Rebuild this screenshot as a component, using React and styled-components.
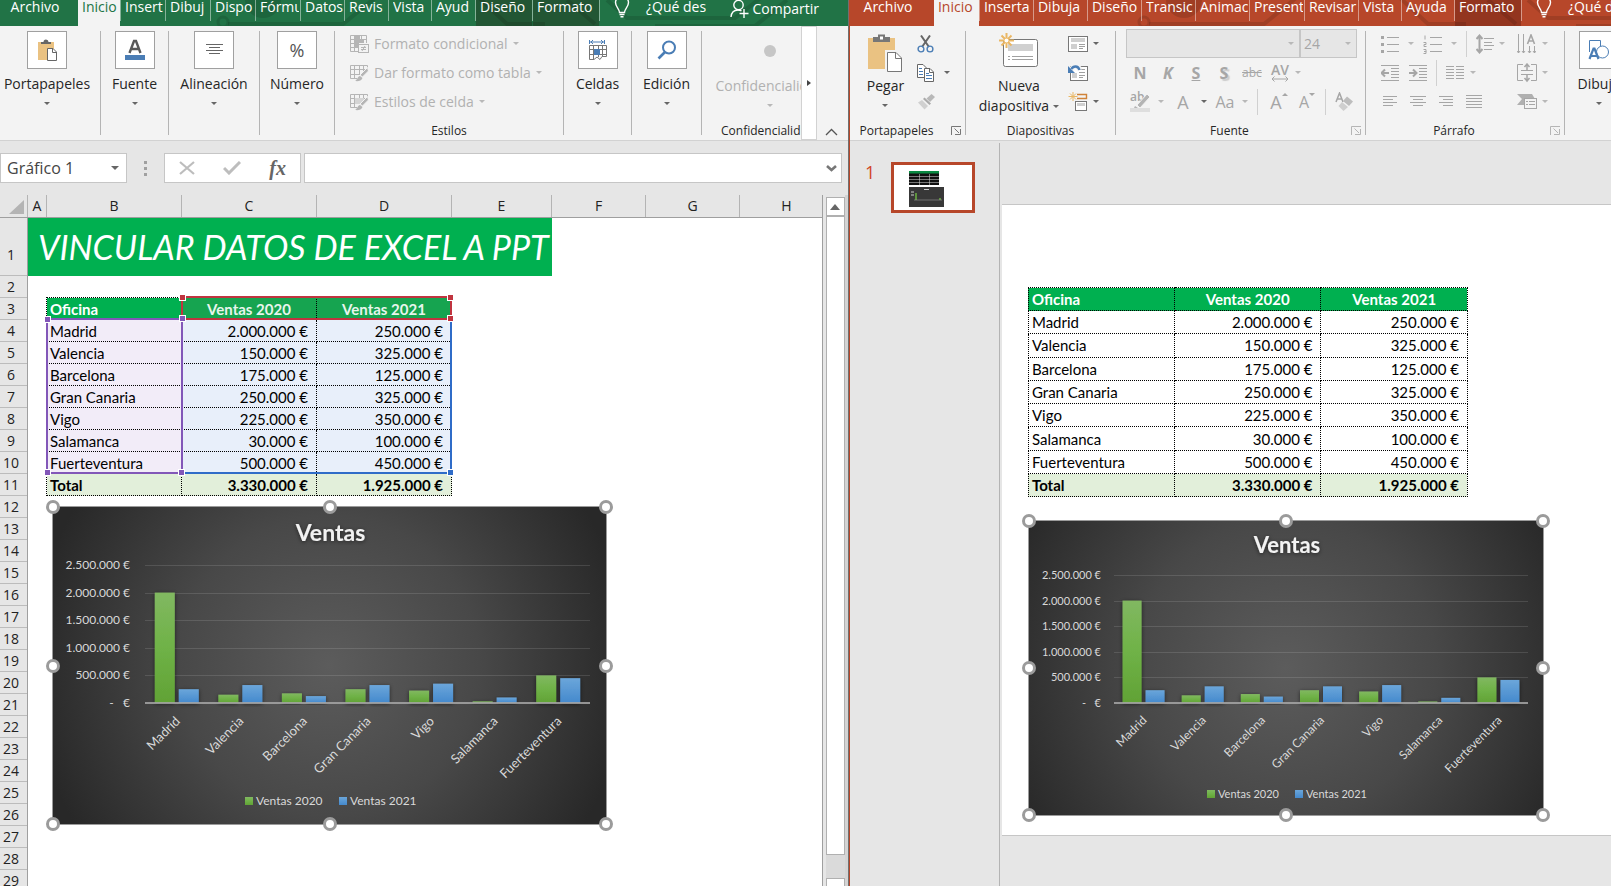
import React from 'react';
import styled, { createGlobalStyle, css } from 'styled-components';

const GlobalStyle = createGlobalStyle`
    * {
        box-sizing: border-box;
    }

    body {
        margin: 0;
        font-family: 'Open Sans', 'Noto Sans', sans-serif;
        font-size: 14px;
        color: #262626;
        background-color: #e6e6e6;
    }

    button, input, select {
        margin: 0;
        padding: 0;
        border: 0;
        border-radius: 0;
        background: transparent;
        font: inherit;
        color: inherit;
    }

    svg {
        display: block;
        flex: none;
    }
`;

const Desktop = styled.div`
    height: 100vh;
    display: flex;
    overflow: hidden;
`;

const Pane = styled.section`
    min-width: 0;
    display: flex;
    flex-direction: column;
    overflow: hidden;
    background-color: #e6e6e6;
`;

const ExcelPane = styled(Pane)`
    flex: 849 1 0;
    border-right: 1px solid #707070;
`;

const PowerPane = styled(Pane)`
    flex: 762 1 0;
    border-left: 1px solid #b7472a;
`;

/* tab strip */

const TabStrip = styled.nav`
    position: relative;
    height: 26px;
    flex: none;
    display: flex;
    overflow: hidden;
    color: #fff;
    background-color: ${(props) => props.$color};
`;

const Circuit = styled.svg`
    position: absolute;
    top: 0;
    left: ${(props) => props.$left}px;
`;

const Tab = styled.button`
    position: relative;
    flex: none;
    width: ${(props) => props.$width}px;
    height: 26px;
    padding: 0 1px 12px 4px;
    overflow: hidden;
    line-height: 14px;
    text-align: left;
    white-space: nowrap;
    ${(props) => props.$first && css`
        text-align: center;
        padding: 0 8px 12px 0;
    `}
    ${(props) => props.$active && css`
        padding: 0 0 12px 4px;
        color: ${props.$active};
        background-color: #f3f3f3;
    `}
    ${(props) => props.$context && css`
        background-color: rgba(40, 0, 0, 0.25);
    `}
`;

const TabText = styled.span`
    display: block;
    overflow: hidden;
    height: 26px;
    line-height: 14px;
`;

const TabLine = styled.i`
    position: relative;
    flex: none;
    width: 1px;
    height: 21px;
    background-color: rgba(255, 255, 255, 0.45);
`;

const TellMe = styled.button`
    position: relative;
    flex: none;
    height: 26px;
    padding-left: 14px;
    padding-bottom: 12px;
    display: flex;
    gap: 16px;
    line-height: 14px;
    white-space: nowrap;
`;

const Share = styled.button`
    position: relative;
    margin-left: auto;
    margin-right: 29px;
    height: 26px;
    padding-bottom: 8px;
    display: flex;
    gap: 3px;
    line-height: 18px;
`;

/* ribbon */

const Ribbon = styled.div`
    flex: none;
    height: 115px;
    display: flex;
    overflow: hidden;
    border-bottom: 1px solid #d2d2d2;
    background-color: #f3f3f3;
`;

const Group = styled.div`
    flex: none;
    width: ${(props) => props.$width}px;
    display: flex;
    flex-direction: column;
    overflow: hidden;
`;

const FluidGroup = styled(Group)`
    flex: 1 1 0;
    width: auto;
    min-width: 0;
`;

const GroupBody = styled.div`
    flex: 1;
    display: flex;
    padding-left: ${(props) => props.$left || 0}px;
`;

const GroupFooter = styled.div`
    height: 19px;
    flex: none;
    display: flex;
    align-items: center;
    padding: 0 4px 0 0;
    font-size: 12px;
    line-height: 16px;
    white-space: nowrap;
`;

const GroupTitle = styled.span`
    flex: 1;
    text-align: center;
    padding-left: ${(props) => props.$left || 0}px;
    padding-right: ${(props) => props.$right || 0}px;
`;

const Divider = styled.i`
    flex: none;
    width: 1px;
    margin: 5px 0;
    background-color: #b4b4b4;
`;

const DropButton = styled.button`
    width: 100%;
    padding: 5px ${(props) => props.$right || 0}px 0 0;
    display: flex;
    flex-direction: column;
    align-items: center;
    line-height: 20px;
    white-space: nowrap;
`;

const IconBox = styled.span`
    width: 40px;
    height: 38px;
    margin-bottom: 5px;
    display: flex;
    align-items: center;
    justify-content: center;
    border: 1px solid #a0a0a0;
    background-color: #fff;
`;

const BigButton = styled.button`
    flex: none;
    width: ${(props) => props.$width}px;
    margin-left: 4px;
    padding-top: 7px;
    display: flex;
    flex-direction: column;
    align-items: center;
    line-height: 20px;
    color: ${(props) => (props.disabled ? '#b1b1b1' : 'inherit')};
    white-space: nowrap;
`;

const BigIcon = styled.span`
    height: 43px;
`;

const Caret = styled.i`
    flex: none;
    width: 0;
    height: 0;
    border: 3px solid transparent;
    border-bottom-width: 0;
    border-top-color: ${(props) => (props.$dim ? '#b8b8b8' : '#666')};
`;

const DropCaret = styled(Caret)`
    margin-top: 8px;
`;

const TightCaret = styled(Caret)`
    margin-left: -5px;
`;

const NameCaret = styled(Caret)`
    border-width: 4px 4px 0;
`;

const WordLine = styled.span`
    display: flex;
    align-items: center;
    gap: 4px;
`;

const Rows = styled.div`
    flex: 1;
    padding: 3px ${(props) => props.$right || 0}px 0 0;
    display: flex;
    flex-direction: column;
`;

const Row = styled.div`
    height: 29px;
    display: flex;
    align-items: center;
`;

const StyleButton = styled.button`
    height: 29px;
    display: flex;
    align-items: center;
    gap: 5px;
    color: #b1b1b1;
    white-space: nowrap;
`;

const Tool = styled.button`
    flex: none;
    width: ${(props) => props.$width || 28}px;
    height: 26px;
    display: flex;
    align-items: center;
    justify-content: center;
    color: #a6a6a6;
    font-size: ${(props) => props.$size || 16}px;
    font-weight: ${(props) => (props.$bold ? 700 : 400)};
    font-style: ${(props) => (props.$italic ? 'italic' : 'normal')};
    text-decoration: ${(props) => props.$line || 'none'};
    text-shadow: ${(props) => (props.$shadow ? '2px 2px 1px #ccc' : 'none')};
`;

const SideTool = styled(Tool)`
    justify-content: flex-start;
    gap: 10px;
`;

const MoreButton = styled.button`
    flex: none;
    width: ${(props) => props.$width}px;
    height: 26px;
    display: flex;
    align-items: center;
    justify-content: center;
`;

const Pusher = styled.i`
    flex: 1;
`;

const ToolLine = styled.i`
    flex: none;
    width: 1px;
    height: 26px;
    margin: 0 ${(props) => props.$gap}px;
    background-color: #d0d0d0;
`;

const Combo = styled.div`
    flex: none;
    width: ${(props) => props.$width}px;
    height: 29px;
    padding: 0 5px 0 3px;
    display: flex;
    align-items: center;
    border: 1px solid #c6c6c6;
    color: #a6a6a6;
    background-color: #e6e6e6;

    select {
        flex: 1;
        min-width: 0;
        appearance: none;
        opacity: 1;
    }
`;

const Dot = styled.span`
    width: 12px;
    height: 12px;
    margin: 12px 0 19px;
    border-radius: 50%;
    background-color: #c6c6c6;
`;

const RibbonScroll = styled.button`
    flex: none;
    width: 16px;
    border: 1px solid #d2d2d2;
    background-color: #fff;
    display: flex;
    align-items: center;
    justify-content: center;
`;

const CollapseButton = styled.button`
    flex: none;
    width: 31px;
    padding: 0 0 4px 8px;
    display: flex;
    align-items: flex-end;
`;

const Percent = styled.span`
    font-size: 18px;
    color: #555;
`;

/* formula bar */

const FormulaBar = styled.div`
    flex: none;
    height: 54px;
    padding: 12px 6px 12px 0;
    display: flex;
    font-size: 16px;
    color: #444;
`;

const Field = styled.div`
    height: 30px;
    display: flex;
    align-items: center;
    border: 1px solid #c6c6c6;
    background-color: #fff;

    input {
        flex: 1;
        min-width: 0;
        padding-left: 6px;
        outline: none;
    }
`;

const NameField = styled(Field)`
    flex: none;
    width: 127px;
    padding-right: 7px;
`;

const FunctionField = styled(Field)`
    flex: none;
    width: 137px;
    justify-content: space-around;
`;

const FormulaField = styled(Field)`
    flex: 1;
    margin-left: 3px;
    padding-right: 3px;
`;

const FxMark = styled.span`
    font-family: 'Liberation Serif', serif;
    font-size: 20px;
    font-style: italic;
    font-weight: 700;
    line-height: 24px;
    color: #666;
`;

const Grip = styled.div`
    flex: none;
    width: 37px;
    display: flex;
    flex-direction: column;
    align-items: center;
    justify-content: center;
    gap: 3px;

    i {
        width: 3px;
        height: 3px;
        background-color: #a0a0a0;
    }
`;

/* worksheet */

const SheetArea = styled.div`
    flex: 1;
    min-height: 0;
    display: flex;
    font-size: 14px;
`;

const Sheet = styled.div`
    flex: 1;
    min-width: 0;
    display: flex;
    flex-direction: column;
    border-right: 1px solid #9f9f9f;
`;

const HeaderRow = styled.div`
    flex: none;
    height: 23px;
    display: flex;
    overflow: hidden;
    border-bottom: 1px solid #9f9f9f;
`;

const Corner = styled.div`
    flex: none;
    width: 28px;
    padding: 5px 3px;
    border-right: 1px solid #b4b4b4;
    display: flex;
    justify-content: flex-end;
`;

const ColumnHead = styled.div`
    flex: none;
    width: ${(props) => props.$width}px;
    border-right: 1px solid #b4b4b4;
    line-height: 22px;
    text-align: center;
    color: #222;
`;

const SheetBody = styled.div`
    flex: 1;
    min-height: 0;
    display: flex;
    overflow: hidden;
`;

const RowHeads = styled.div`
    flex: none;
    width: 28px;
    border-right: 1px solid #9f9f9f;
    text-align: center;
    color: #222;
`;

const RowHead = styled.div`
    height: ${(props) => (props.$tall ? 58 : 22)}px;
    padding: ${(props) => (props.$tall ? 26 : 0)}px 5px 0 0;
    border-bottom: 1px solid #bcbcbc;
    line-height: 22px;
`;

const Cells = styled.div`
    flex: 1;
    min-width: 0;
    overflow: hidden;
    background-color: #fff;
`;

const Banner = styled.h1`
    width: 524px;
    height: 58px;
    margin: 0;
    padding-left: 10px;
    line-height: 58px;
    font-family: Lato, 'Open Sans', sans-serif;
    font-size: 34px;
    font-style: italic;
    font-weight: 400;
    white-space: nowrap;
    color: #fff;
    background-color: #00b050;
`;

const SheetTable = styled.div`
    position: relative;
    width: 406px;
    margin: 21px 0 0 18px;
`;

const Table = styled.table`
    width: 100%;
    table-layout: fixed;
    border-collapse: collapse;
    font-family: Lato, 'Open Sans', sans-serif;
    font-size: 15px;
    line-height: 20px;
    color: #000;

    th, td {
        height: ${(props) => props.$row}px;
        padding: 0 8px 0 3px;
        border: 1px dotted #000;
        text-align: right;
        white-space: nowrap;
    }

    th:first-child, td:first-child {
        width: ${(props) => props.$first}px;
        padding-right: 3px;
        text-align: left;
        font-weight: inherit;
    }

    thead th {
        padding-right: 3px;
        color: #fff;
        background-color: #00b050;
        text-align: center;
    }

    thead tr, tfoot tr {
        font-weight: 700;
    }

    tfoot th, tfoot td {
        background-color: #e2efda;
    }
`;

const RangeTable = styled(Table)`
    thead th + th {
        color: #e8f5ec;
        background-color: #16a450;
    }

    tbody th {
        background-color: #f2ecf8;
    }

    tbody td {
        background-color: #e8effa;
    }
`;

const Range = styled.div`
    position: absolute;
    top: ${(props) => props.$top}px;
    left: ${(props) => props.$left}px;
    width: ${(props) => props.$width}px;
    height: ${(props) => props.$height}px;
    border: 2px solid ${(props) => props.$color};
`;

const RangeKnob = styled.i`
    position: absolute;
    width: 7px;
    height: 7px;
    border: 1px solid #fff;
    background-color: ${(props) => props.$color};
    left: ${(props) => (props.$right ? 'auto' : '-4px')};
    right: ${(props) => (props.$right ? '-4px' : 'auto')};
    top: ${(props) => (props.$bottom ? 'auto' : '-4px')};
    bottom: ${(props) => (props.$bottom ? '-4px' : 'auto')};
`;

const ScrollTrack = styled.div`
    flex: none;
    width: 25px;
    padding: 2px 0 0 3px;
    display: flex;
    flex-direction: column;
    border-right: 3px solid #d4d4d4;
`;

const ScrollButton = styled.button`
    flex: none;
    height: 19px;
    display: flex;
    align-items: center;
    justify-content: center;
    border: 1px solid #b0b0b0;
    background-color: #fff;
`;

const ScrollThumb = styled.div`
    flex: 1;
    border: 1px solid #b0b0b0;
    background-color: #fff;
`;

const ScrollGap = styled.div`
    flex: none;
    height: 23px;
    background-color: #dadada;
`;

const ScrollEnd = styled.div`
    flex: none;
    height: 8px;
    border: 1px solid #b0b0b0;
    border-bottom: 0;
    background-color: #fff;
`;

/* chart */

const ChartFrame = styled.figure`
    position: relative;
    width: ${(props) => props.$width}px;
    margin: ${(props) => props.$top}px 0 0 ${(props) => props.$left}px;
    border: 1px solid #9b9b9b;
    background: radial-gradient(circle 300px at center, #5c5c5c, #484848 50%, #282828);
`;

const ChartText = styled.text`
    font-family: Lato, 'Open Sans', sans-serif;
    font-size: ${(props) => props.$size}px;
    font-weight: ${(props) => (props.$bold ? 700 : 400)};
    fill: ${(props) => (props.$bold ? '#f2f2f2' : '#d9d9d9')};
`;

const Knob = styled.i`
    position: absolute;
    width: 14px;
    height: 14px;
    margin: -7px;
    border: 3px solid #9b9b9b;
    border-radius: 50%;
    background-color: #fff;
    left: ${(props) => props.$x};
    top: ${(props) => props.$y};
`;

/* presentation */

const Stage = styled.div`
    flex: 1;
    min-height: 0;
    display: flex;
`;

const Thumbnails = styled.aside`
    flex: none;
    width: 150px;
    padding: 21px 0 0 15px;
    margin-top: 2px;
    display: flex;
    align-items: flex-start;
    gap: 16px;
    border-right: 1px solid #b4b4b4;
`;

const SlideNumber = styled.span`
    flex: none;
    width: 10px;
    font-size: 18px;
    line-height: 16px;
    color: #d24726;
`;

const Thumbnail = styled.button`
    flex: none;
    width: 84px;
    height: 51px;
    margin-top: -2px;
    border: 3px solid #b7472a;
    background-color: #fff;
`;

const Workspace = styled.main`
    flex: 1;
    min-width: 0;
    padding: 63px 0 50px 2px;
    display: flex;
    overflow: hidden;
`;

const Slide = styled.div`
    flex: 1;
    min-width: 0;
    padding: 82px 0 0 26px;
    overflow: hidden;
    border-top: 1px solid #c6c6c6;
    border-bottom: 1px solid #c6c6c6;
    background-color: #fff;
`;

const SlideTable = styled.div`
    width: 440px;
    height: 210px;

    table {
        height: 210px;
    }
`;

const sales = [
    { office: 'Madrid', y2020: 2000000, y2021: 250000 },
    { office: 'Valencia', y2020: 150000, y2021: 325000 },
    { office: 'Barcelona', y2020: 175000, y2021: 125000 },
    { office: 'Gran Canaria', y2020: 250000, y2021: 325000 },
    { office: 'Vigo', y2020: 225000, y2021: 350000 },
    { office: 'Salamanca', y2020: 30000, y2021: 100000 },
    { office: 'Fuerteventura', y2020: 500000, y2021: 450000 },
];

const euro = (n) => `${String(n).replace(/\B(?=(\d{3})+$)/g, '.')} €`;
const total = (key) => sales.reduce((sum, item) => sum + item[key], 0);

const SalesRows = () => (
    <>
        <thead>
            <tr>
                <th scope="col">Oficina</th>
                <th scope="col">Ventas 2020</th>
                <th scope="col">Ventas 2021</th>
            </tr>
        </thead>
        <tbody>
            {sales.map((item) => (
                <tr key={item.office}>
                    <th scope="row">{item.office}</th>
                    <td>{euro(item.y2020)}</td>
                    <td>{euro(item.y2021)}</td>
                </tr>
            ))}
        </tbody>
        <tfoot>
            <tr>
                <th scope="row">Total</th>
                <td>{euro(total('y2020'))}</td>
                <td>{euro(total('y2021'))}</td>
            </tr>
        </tfoot>
    </>
);

const knobs = [
    ['0%', '0%'], ['50%', '0%'], ['100%', '0%'],
    ['0%', '50%'], ['100%', '50%'],
    ['0%', '100%'], ['50%', '100%'], ['100%', '100%'],
];

const excelChart = {
    id: 'xl', width: 555, height: 317, marginTop: 10, marginLeft: 24,
    x0: 92, x1: 537, y0: 58, y1: 196, labelX: 77, bar: 20, barGap: 4,
    titleY: 34, titleSize: 23, axisSize: 12, nameSize: 13, nameY: 19,
    legendY: 298, legend: [192, 286],
};

const slideChart = {
    id: 'pp', width: 516, height: 294, marginTop: 23, marginLeft: 0,
    x0: 85, x1: 499, y0: 54, y1: 182, labelX: 72, bar: 19, barGap: 4,
    titleY: 32, titleSize: 22, axisSize: 11, nameSize: 12, nameY: 18,
    legendY: 277, legend: [178, 266],
};

const SalesChart = ({ chart }) => {
    const { id, x0, x1, y0, y1, bar, barGap } = chart;
    const step = (x1 - x0) / sales.length;
    const barHeight = (n) => ((y1 - y0) * n) / 2500000;
    const ticks = [2500000, 2000000, 1500000, 1000000, 500000, 0];

    return (
        <ChartFrame $width={chart.width} $top={chart.marginTop} $left={chart.marginLeft}>
            <svg width="100%" height={chart.height} role="img" aria-label="Ventas">
                <defs>
                    <linearGradient id={`${id}-green`} x1="0" y1="0" x2="0" y2="1">
                        <stop offset="0" stopColor="#81b861" />
                        <stop offset="0.5" stopColor="#6fb247" />
                        <stop offset="1" stopColor="#61a235" />
                    </linearGradient>
                    <linearGradient id={`${id}-blue`} x1="0" y1="0" x2="0" y2="1">
                        <stop offset="0" stopColor="#6ba6da" />
                        <stop offset="1" stopColor="#4489cd" />
                    </linearGradient>
                    <filter id={`${id}-shadow`} x="-50%" y="-20%" width="200%" height="140%">
                        <feDropShadow dx="0" dy="1" stdDeviation="2" floodOpacity="0.55" />
                    </filter>
                </defs>
                <ChartText x={chart.width / 2} y={chart.titleY} textAnchor="middle" $size={chart.titleSize} $bold filter={`url(#${id}-shadow)`}>
                    Ventas
                </ChartText>
                {ticks.map((n) => {
                    const y = y1 - barHeight(n);
                    return (
                        <g key={n}>
                            {n > 0 && <path d={`M${x0} ${Math.round(y) + 0.5}H${x1}`} stroke="#fff" strokeOpacity="0.12" />}
                            <ChartText x={chart.labelX} y={y + 4} textAnchor="end" $size={chart.axisSize}>
                                {n ? euro(n) : '-\u00A0\u00A0\u00A0€'}
                            </ChartText>
                        </g>
                    );
                })}
                {sales.map((item, i) => {
                    const mid = x0 + step * (i + 0.5);
                    return (
                        <g key={item.office}>
                            <g filter={`url(#${id}-shadow)`}>
                                <rect x={mid - bar - barGap / 2} y={y1 - barHeight(item.y2020)} width={bar} height={barHeight(item.y2020)} fill={`url(#${id}-green)`} />
                                <rect x={mid + barGap / 2} y={y1 - barHeight(item.y2021)} width={bar} height={barHeight(item.y2021)} fill={`url(#${id}-blue)`} />
                            </g>
                            <ChartText transform={`translate(${mid + 4} ${y1 + chart.nameY}) rotate(-45)`} textAnchor="end" $size={chart.nameSize}>
                                {item.office}
                            </ChartText>
                        </g>
                    );
                })}
                <path d={`M${x0} ${y1}H${x1}`} stroke="#a6a6a6" strokeWidth="2" strokeOpacity="0.85" />
                {['Ventas 2020', 'Ventas 2021'].map((name, i) => (
                    <g key={name}>
                        <rect x={chart.legend[i]} y={chart.legendY - 8} width="8" height="8" fill={`url(#${id}-${i ? 'blue' : 'green'})`} />
                        <ChartText x={chart.legend[i] + 11} y={chart.legendY} $size={chart.axisSize}>{name}</ChartText>
                    </g>
                ))}
            </svg>
            {knobs.map(([x, y]) => (
                <Knob key={x + y} $x={x} $y={y} />
            ))}
        </ChartFrame>
    );
};

/* icons */

const CircuitArt = ({ left }) => (
    <Circuit $left={left} width="600" height="26" fill="none" stroke="#000" strokeOpacity="0.12" strokeWidth="4">
        <circle cx="8" cy="22" r="5" strokeWidth="3" />
        <path d="M13 24H128L160 -2M262 -4L292 24H330M352 0L380 24M392 0L412 18H520L548 -4M440 26H540L572 0" />
        <circle cx="48" cy="0" r="18" fill="#000" fillOpacity="0.12" stroke="none" />
    </Circuit>
);

const Bulb = () => (
    <svg width="16" height="18" viewBox="0 0 16 18" fill="none" stroke="#fff" strokeWidth="1.4">
        <path d="M5.5 12.5C5.5 9 1.5 7 1.5 2.5A6.5 6 0 0 1 14.500 2.500C14.500 7 10.500 9 10.500 12.500ZM5.500 14.500H10.500M6.500 16.700H9.500" />
    </svg>
);

const SharePerson = () => (
    <svg width="19" height="18" viewBox="0 0 19 18" fill="none" stroke="#fff" strokeWidth="1.4">
        <circle cx="8.500" cy="5" r="4.700" />
        <path d="M1 17C1.500 12 4.500 10 8 10C9.500 10 10.500 10.300 11.500 11M14 9V18M9.500 13.500H18.500" />
    </svg>
);

const PasteSmall = () => (
    <svg width="20" height="22" viewBox="0 0 20 22">
        <path d="M1 3H17V21H1Z" fill="#eac282" />
        <path d="M4 5V3H6.500A2.500 2.500 0 0 1 11.500 3H14V5Z" fill="#666" />
        <path d="M10.500 9.500H16L19.500 13V21.500H10.500Z" fill="#fff" stroke="#666" />
        <path d="M15.500 9.500V13.500H19.500" fill="none" stroke="#666" />
    </svg>
);

const PasteLarge = () => (
    <svg width="36" height="40" viewBox="0 0 36 40">
        <path d="M1 5H28V36H1Z" fill="#eac282" />
        <path d="M6 9V4H11V1.500H18V4H23V9Z" fill="#777" />
        <rect x="13" y="3.500" width="3" height="3" fill="#fff" />
        <path d="M19.500 18.500H29L34.500 24V38.500H19.500Z" fill="#fff" stroke="#f3f3f3" strokeWidth="3" />
        <path d="M20.500 19.500H29L34.500 25V38.500H20.500Z" fill="#fff" stroke="#777" />
        <path d="M28.500 19.500V25.500H34.500" fill="none" stroke="#777" />
    </svg>
);

const FontBox = () => (
    <svg width="22" height="22" viewBox="0 0 22 22">
        <path d="M5.500 14L10 2H12L16.500 14M7.500 10H14.500" fill="none" stroke="#595959" strokeWidth="2.400" />
        <rect x="1" y="16" width="20" height="5" fill="#4a7db5" />
    </svg>
);

const Lines = ({ rows, width = 18, height = 20, color = '#a6a6a6' }) => (
    <svg width={width} height={height} stroke={color}>
        {rows.map(([a, b, y]) => (
            <path key={`${a}-${y}`} d={`M${a} ${y}.500H${b}`} />
        ))}
    </svg>
);

const CellsIcon = () => (
    <svg width="20" height="22" viewBox="0 0 20 22" fill="none" stroke="#777">
        <path d="M1.500 1V5M16.500 1V5M2 3H16M5 1L3 3L5 5M13 1L15 3L13 5" stroke="#4a7db5" />
        <path d="M1.500 6.500H18.500V17.500H14L12 20.500L9 18L6 20.500H1.500ZM5.500 6V20M10.500 6V18M14.500 6V18M1 10.500H18M1 15.500H18" />
        <rect x="6" y="10" width="6" height="6" fill="#4a7db5" stroke="none" />
    </svg>
);

const Magnifier = () => (
    <svg width="20" height="20" viewBox="0 0 20 20" fill="none" stroke="#4a7db5" strokeWidth="2">
        <circle cx="12" cy="7.500" r="6" />
        <path d="M8 12L1.500 18.500" strokeWidth="2.600" />
    </svg>
);

const CondIcon = () => (
    <svg width="19" height="20" viewBox="0 0 19 20" fill="none" stroke="#b5b5b5">
        <path d="M0.500 1.500H16.500V9M9 17.500H0.500V1.500M4.500 1V18M11.500 1V9M1 5.500H16M1 9.500H9M1 13.500H8" />
        <path d="M5 2H10V5H5ZM5 6H14V9H5ZM5 10H8V13H5Z" fill="#b5b5b5" stroke="none" />
        <rect x="8.500" y="10.500" width="10" height="8" fill="#f3f3f3" />
        <path d="M11 13.500H16M11 15.500H16M15 12L12 17" />
    </svg>
);

const TableIcon = ({ filled }) => (
    <svg width="19" height="20" viewBox="0 0 19 20" fill="none" stroke="#b5b5b5">
        <path d="M0.500 2.500H17.500V8M7 15.500H0.500V2.500M4.500 2V15M9.500 2V12M13.500 2V9M1 6.500H16M1 11.500H11" />
        {filled && <rect x="5" y="6" width="9" height="6" fill="#d5d5d5" stroke="none" />}
        <path d="M17.500 4.500L18.500 8L12.500 14L10 12Z" fill="#b5b5b5" stroke="#f3f3f3" />
        <path d="M10 13L12.500 15C11.500 18 8 18.500 5 18C7.500 17 7.500 13.500 10 13Z" fill="#b5b5b5" stroke="none" />
    </svg>
);

const Chevron = ({ up, color = '#555', bold }) => (
    <svg width="13" height="8" viewBox="0 0 13 8" fill="none" stroke={color} strokeWidth={bold ? 2.6 : 1.3}>
        <path d={up ? 'M1 7L6.500 1.500L12 7' : 'M2 2L6.500 6L11 2'} />
    </svg>
);

const CrossIcon = () => (
    <svg width="16" height="14" viewBox="0 0 16 14" stroke="#bdbdbd" strokeWidth="2.200">
        <path d="M1 1L15 13M15 1L1 13" />
    </svg>
);

const CheckIcon = () => (
    <svg width="18" height="14" viewBox="0 0 18 14" fill="none" stroke="#bdbdbd" strokeWidth="3">
        <path d="M1 7L6 12L17 1" />
    </svg>
);

const Launcher = ({ dim }) => (
    <svg width="10" height="9" viewBox="0 0 10 9" fill="none" stroke={dim ? '#b5b5b5' : '#777'}>
        <path d="M0.500 9V0.500H10M3.500 2.500L8 7M9.500 3V8.500H4" />
    </svg>
);

const Scissors = () => (
    <svg width="17" height="18" viewBox="0 0 17 18" fill="none">
        <path d="M4 0.500L12 12M13 0.500L5 12" stroke="#666" strokeWidth="2" />
        <circle cx="4" cy="14" r="2.900" stroke="#4a7db5" strokeWidth="1.400" />
        <circle cx="13" cy="14" r="2.900" stroke="#4a7db5" strokeWidth="1.400" />
    </svg>
);

const CopyIcon = () => (
    <svg width="17" height="18" viewBox="0 0 17 18" fill="#fff" stroke="#666">
        <path d="M0.500 0.500H6L9.500 4V13.500H0.500Z" />
        <path d="M2 4.500H5M2 7.500H6M2 10.500H6" stroke="#4a7db5" />
        <path d="M7.500 4.500H13L16.500 8V17.500H7.500Z" />
        <path d="M12.500 4.500V8.500H16.500" fill="none" />
        <path d="M9 9.500H12M9 11.500H15M9 14.500H15" stroke="#4a7db5" />
    </svg>
);

const BrushIcon = () => (
    <svg width="18" height="16" viewBox="0 0 18 16">
        <path d="M14.500 0L18 3L13 8L9.500 4.500Z" fill="#b8b8b8" />
        <path d="M7.500 3.500L14 9.500L12.500 11L6 5Z" fill="#aaa" />
        <path d="M5 6L11 12L7.500 15.500L1 8.500Z" fill="#d0d0d0" />
    </svg>
);

const burst = 'M7.500 0V15M0 7.500H15M2.500 2.500L12.500 12.500M12.500 2.500L2.500 12.500';

const NewSlideIcon = () => (
    <svg width="40" height="40" viewBox="0 0 40 40" fill="none">
        <rect x="4.500" y="6.500" width="34" height="27" rx="2" fill="#fff" stroke="#777" />
        <rect x="9" y="11" width="25" height="7" fill="#d0d0d0" />
        <path d="M9 23.500H11M13 23.500H34M9 26.500H11M13 26.500H34" stroke="#a0a0a0" />
        <path d={burst} stroke="#eab765" strokeWidth="2" />
        <circle cx="7.500" cy="7.500" r="2" fill="#fff" />
    </svg>
);

const LayoutIcon = () => (
    <svg width="20" height="16" viewBox="0 0 20 16" fill="none">
        <rect x="0.500" y="0.500" width="19" height="15" fill="#fff" stroke="#777" />
        <path d="M3 2H17V6H3ZM3 8H9V13H3Z" fill="#d0d0d0" />
        <path d="M11 8.500H17M11 10.500H17M11 12.500H15" stroke="#a0a0a0" />
    </svg>
);

const ResetIcon = () => (
    <svg width="20" height="18" viewBox="0 0 20 18" fill="none">
        <rect x="2.500" y="2.500" width="17" height="14" fill="#fff" stroke="#777" />
        <path d="M4 9H9V14H4Z" fill="#d0d0d0" />
        <path d="M11 5.500H17M11 8.500H17M11 11.500H17M11 13.500H15" stroke="#a0a0a0" />
        <path d="M3 6C5 2 10 1 12 6" stroke="#f3f3f3" strokeWidth="5" />
        <path d="M3.500 5C5 2 10 1 11.500 6" stroke="#4a7db5" strokeWidth="2.400" />
        <path d="M0 2V9H7Z" fill="#4a7db5" />
    </svg>
);

const SectionIcon = () => (
    <svg width="20" height="19" viewBox="0 0 20 19" fill="none">
        <path d="M5 0V9M0.500 4.500H9.500M2 1.500L8 7.500M8 1.500L2 7.500" stroke="#eab765" />
        <path d="M9 2.500H18.500V6.500H9" stroke="#d08238" strokeWidth="1.400" />
        <rect x="7.500" y="9.500" width="11" height="9" fill="#fff" stroke="#777" />
        <path d="M9 11H17V14H9Z" fill="#d0d0d0" />
    </svg>
);

const SpacingMark = styled.span`
    display: flex;
    flex-direction: column;
    align-items: center;
    font-size: 14px;
    font-weight: 600;
    line-height: 12px;
`;

const SpacingIcon = () => (
    <SpacingMark>
        AV
        <svg width="18" height="6" viewBox="0 0 18 6" fill="none" stroke="#a6a6a6">
            <path d="M1 3H17M3.500 0.500L1 3L3.500 5.500M14.500 0.500L17 3L14.500 5.500" />
        </svg>
    </SpacingMark>
);

const MarkerMark = styled.span`
    width: 20px;
    height: 20px;
    font-size: 12px;
    font-weight: 600;
    line-height: 10px;
    text-align: left;
    border-bottom: 4px solid #dedede;

    svg {
        overflow: visible;
    }
`;

const MarkerIcon = () => (
    <MarkerMark>
        ab
        <svg width="20" height="6" viewBox="0 0 20 6">
            <path d="M7 3L17 -8L20 -5L10 6Z" fill="#b4b4b4" stroke="#f3f3f3" />
            <path d="M5 4L8 6H4Z" fill="#b4b4b4" />
        </svg>
    </MarkerMark>
);

const SizeArrow = styled.i`
    align-self: flex-start;
    margin-top: 4px;
    border: 3px solid transparent;
    border-top: ${(props) => (props.$up ? 0 : '3px solid #a6a6a6')};
    border-bottom: ${(props) => (props.$up ? '3px solid #a6a6a6' : 0)};
`;

const EraserIcon = () => (
    <svg width="18" height="20" viewBox="0 0 18 20">
        <path d="M1 10L4.500 1L8 10M2.500 7H6.500" fill="none" stroke="#a6a6a6" strokeWidth="1.500" />
        <path d="M12 4.500L18 9.500L14 14L8 9Z" fill="#bdbdbd" />
        <path d="M7 10L13 15L8.500 19L3.500 14Z" fill="#cfcfcf" />
    </svg>
);

const ListIcon = ({ numbered }) => (
    <svg width="20" height="20" viewBox="0 0 20 20" fill="none" stroke="#a6a6a6">
        <path d="M7 3.500H19M7 10.500H19M7 17.500H19" />
        {numbered ? (
            <path d="M2 1.500V5.500M0.500 8.500H3V10.500H1V12.500H3.500M0.500 15.500H3V17.500H1M3 17V19.500H0.500" />
        ) : (
            <path d="M1 3.500H4M1 10.500H4M1 17.500H4" strokeWidth="3" />
        )}
    </svg>
);

const LineSpacing = () => (
    <svg width="18" height="20" viewBox="0 0 18 20" fill="none" stroke="#a6a6a6">
        <path d="M3.500 2V18M0.500 5L3.500 1.500L6.500 5M0.500 15L3.500 18.500L6.500 15" strokeWidth="2" />
        <path d="M8 4.500H18M8 8.500H16M8 11.500H18M8 15.500H16" />
    </svg>
);

const TextDirection = () => (
    <svg width="19" height="20" viewBox="0 0 19 20" fill="none" stroke="#a6a6a6">
        <path d="M1.500 0V19M6.500 0V19M12.500 12V19M17.500 12V19M0 17L1.500 19L3 17M5 17L6.500 19L8 17M11 17L12.500 19L14 17M16 17L17.500 19L19 17" />
        <path d="M10.500 10L14 1L17.500 10M12 7H16" strokeWidth="1.600" />
    </svg>
);

const IndentIcon = ({ right }) => (
    <svg width="18" height="18" viewBox="0 0 18 18" fill="none" stroke="#a6a6a6">
        <path d="M0 1.500H18M0 16.500H18M10 4.500H18M10 7.500H18M10 10.500H18M10 13.500H18" />
        <path d={right ? 'M0 9H7M4 5.500L7.500 9L4 12.500' : 'M1 9H8M4 5.500L0.500 9L4 12.500'} strokeWidth="2" />
    </svg>
);

const AlignText = () => (
    <svg width="20" height="20" viewBox="0 0 20 20" fill="none" stroke="#a6a6a6">
        <path d="M6 1.500H0.500V17.500H6M14 1.500H19.500V17.500H14M4 7.500H16M4 11.500H16" />
        <path d="M10 7V2M7.500 4L10 1L12.500 4M10 12V17M7.500 15L10 18L12.500 15" strokeWidth="1.500" />
    </svg>
);

const SmartArt = () => (
    <svg width="20" height="18" viewBox="0 0 20 18">
        <path d="M0 1H15L18 6H8V12H0L5 6Z" fill="#b0b0b0" />
        <rect x="7.500" y="5.500" width="12" height="10" fill="#f3f3f3" stroke="#a6a6a6" />
        <path d="M9 8.500H11M12 8.500H18M9 11.500H11M12 11.500H18" stroke="#a6a6a6" />
    </svg>
);

const DrawIcon = () => (
    <svg width="22" height="22" viewBox="0 0 22 22" fill="none" stroke="#4a7db5">
        <path d="M1.500 13V1.500H12.500V8" />
        <circle cx="14.500" cy="13" r="6" fill="#fff" />
        <path d="M1.500 20L5.500 9.500H6.500L10.500 20M3 17H9" strokeWidth="2.200" />
    </svg>
);

const ThumbArt = () => (
    <svg width="78" height="45" viewBox="0 0 78 45">
        <path d="M15 7H45V20H15Z" fill="#111" />
        <path d="M15 6H45V8.500H15Z" fill="#0a8a42" />
        <path d="M15 11.500H45M15 14.500H45M15 17.500H45M25.500 9V20M35.500 9V20" stroke="#ddd" strokeWidth="0.500" />
        <path d="M15 22H50V42H15Z" fill="#383838" />
        <path d="M30 24.500H35M17 27H20M17 30H20" stroke="#ccc" strokeWidth="1" />
        <path d="M22 28V35M46 33V35" stroke="#6bb13f" strokeWidth="1.500" />
        <path d="M20 35H48" stroke="#999" strokeWidth="0.600" />
    </svg>
);

const BoxGroup = ({ width, label, icon, right }) => (
    <>
        <Group $width={width}>
            <DropButton $right={right}>
                <IconBox>{icon}</IconBox>
                {label}
                <DropCaret />
            </DropButton>
        </Group>
        <Divider />
    </>
);

const Tabs = ({ items, accent }) => items.map(([name, width, context], i) => (
    <React.Fragment key={name}>
        <Tab $width={width} $first={i === 0} $active={i === 1 && accent} $context={context}>
            <TabText>{name}</TabText>
        </Tab>
        {i > 0 && <TabLine />}
    </React.Fragment>
));

const excelTabs = [
    ['Archivo', 78], ['Inicio', 42], ['Insert', 44], ['Dibuj', 44], ['Dispo', 44],
    ['Fórmu', 44], ['Datos', 43], ['Revis', 43], ['Vista', 42], ['Ayud', 43],
    ['Diseño', 56, true], ['Formato', 66, true],
];

const powerTabs = [
    ['Archivo', 84], ['Inicio', 45], ['Inserta', 53], ['Dibuja', 53], ['Diseño', 53],
    ['Transic', 53], ['Animac', 53], ['Present', 54], ['Revisar', 53],
    ['Vista', 42], ['Ayuda', 52], ['Formato', 66, true],
];

const columns = [['A', 19], ['B', 135], ['C', 135], ['D', 135], ['E', 100], ['F', 94], ['G', 94], ['H', 94]];
const rowNumbers = Array.from({ length: 29 }, (_, i) => i + 1);

const Excel = () => (
    <ExcelPane>
        <TabStrip $color="#217346">
            <CircuitArt left={215} />
            <Tabs items={excelTabs} accent="#217346" />
            <TellMe>
                <Bulb />
                ¿Qué des
            </TellMe>
            <Share>
                <SharePerson />
                Compartir
            </Share>
        </TabStrip>
        <Ribbon>
            <BoxGroup width={100} right={6} label="Portapapeles" icon={<PasteSmall />} />
            <BoxGroup width={67} label="Fuente" icon={<FontBox />} />
            <BoxGroup
                width={90}
                label="Alineación"
                icon={<Lines color="#666" width={17} height={12} rows={[[0, 17, 0], [3, 14, 3], [0, 17, 6], [3, 14, 9]]} />}
            />
            <BoxGroup width={74} label="Número" icon={<Percent>%</Percent>} />
            <Group $width={228}>
                <GroupBody $left={15}>
                    <Rows>
                        <StyleButton disabled><CondIcon />Formato condicional<Caret $dim /></StyleButton>
                        <StyleButton disabled><TableIcon />Dar formato como tabla<Caret $dim /></StyleButton>
                        <StyleButton disabled><TableIcon filled />Estilos de celda<Caret $dim /></StyleButton>
                    </Rows>
                </GroupBody>
                <GroupFooter><GroupTitle $left={4}>Estilos</GroupTitle></GroupFooter>
            </Group>
            <Divider />
            <BoxGroup width={67} label="Celdas" icon={<CellsIcon />} />
            <BoxGroup width={69} label="Edición" icon={<Magnifier />} />
            <FluidGroup>
                <GroupBody $left={8}>
                    <BigButton $width={112} disabled>
                        <Dot />
                        Confidencialidad
                        <DropCaret $dim />
                    </BigButton>
                </GroupBody>
                <GroupFooter><GroupTitle $left={19}>Confidencialid</GroupTitle></GroupFooter>
            </FluidGroup>
            <RibbonScroll aria-label="Más">
                <svg width="4" height="6"><path d="M0 0L4 3L0 6Z" fill="#444" /></svg>
            </RibbonScroll>
            <CollapseButton aria-label="Contraer la cinta"><Chevron up /></CollapseButton>
        </Ribbon>
        <FormulaBar>
            <NameField>
                <input aria-label="Cuadro de nombres" defaultValue="Gráfico 1" />
                <NameCaret />
            </NameField>
            <Grip><i /><i /><i /></Grip>
            <FunctionField>
                <button type="button" aria-label="Cancelar"><CrossIcon /></button>
                <button type="button" aria-label="Introducir"><CheckIcon /></button>
                <button type="button" aria-label="Insertar función"><FxMark>fx</FxMark></button>
            </FunctionField>
            <FormulaField>
                <input aria-label="Barra de fórmulas" />
                <Chevron color="#777" bold />
            </FormulaField>
        </FormulaBar>
        <SheetArea>
            <Sheet>
                <HeaderRow>
                    <Corner>
                        <svg width="15" height="14"><path d="M15 0V14H0Z" fill="#b4b4b4" /></svg>
                    </Corner>
                    {columns.map(([name, width]) => (
                        <ColumnHead key={name} $width={width}>{name}</ColumnHead>
                    ))}
                </HeaderRow>
                <SheetBody>
                    <RowHeads>
                        {rowNumbers.map((n) => (
                            <RowHead key={n} $tall={n === 1}>{n}</RowHead>
                        ))}
                    </RowHeads>
                    <Cells>
                        <Banner>VINCULAR DATOS DE EXCEL A PPT</Banner>
                        <SheetTable>
                            <RangeTable $row={22} $first={135}>
                                <SalesRows />
                            </RangeTable>
                            <Range $top={21} $left={135} $width={271} $height={156} $color="#2f6cc8">
                                <RangeKnob $color="#2f6cc8" $right $bottom />
                            </Range>
                            <Range $top={21} $left={0} $width={137} $height={156} $color="#8257b8">
                                <RangeKnob $color="#8257b8" />
                                <RangeKnob $color="#8257b8" $bottom />
                                <RangeKnob $color="#8257b8" $right $bottom />
                            </Range>
                            <Range $top={-1} $left={135} $width={271} $height={24} $color="#c0343f">
                                <RangeKnob $color="#c0343f" />
                                <RangeKnob $color="#c0343f" $right />
                                <RangeKnob $color="#8257b8" $bottom />
                                <RangeKnob $color="#c0343f" $right $bottom />
                            </Range>
                        </SheetTable>
                        <SalesChart chart={excelChart} />
                    </Cells>
                </SheetBody>
            </Sheet>
            <ScrollTrack>
                <ScrollButton aria-label="Subir">
                    <svg width="10" height="6"><path d="M5 0L10 6H0Z" fill="#666" /></svg>
                </ScrollButton>
                <ScrollThumb />
                <ScrollGap />
                <ScrollEnd />
            </ScrollTrack>
        </SheetArea>
    </ExcelPane>
);

const PowerPoint = () => (
    <PowerPane>
        <TabStrip $color="#b7472a">
            <CircuitArt left={286} />
            <Tabs items={powerTabs} accent="#b7472a" />
            <TellMe>
                <Bulb />
                ¿Qué d
            </TellMe>
        </TabStrip>
        <Ribbon>
            <Group $width={115}>
                <GroupBody>
                    <BigButton $width={63}>
                        <BigIcon><PasteLarge /></BigIcon>
                        Pegar
                        <DropCaret />
                    </BigButton>
                    <Rows>
                        <Row><SideTool $width={40} aria-label="Cortar"><Scissors /></SideTool></Row>
                        <Row><SideTool $width={40} aria-label="Copiar"><CopyIcon /><Caret /></SideTool></Row>
                        <Row><SideTool $width={40} aria-label="Copiar formato" disabled><BrushIcon /></SideTool></Row>
                    </Rows>
                </GroupBody>
                <GroupFooter><GroupTitle $right={8}>Portapapeles</GroupTitle><Launcher /></GroupFooter>
            </Group>
            <Divider />
            <Group $width={149}>
                <GroupBody>
                    <BigButton $width={98}>
                        <BigIcon><NewSlideIcon /></BigIcon>
                        Nueva
                        <WordLine>diapositiva<Caret /></WordLine>
                    </BigButton>
                    <Rows>
                        <Row><SideTool $width={40} aria-label="Diseño de diapositiva"><LayoutIcon /><TightCaret /></SideTool></Row>
                        <Row><SideTool $width={40} aria-label="Restablecer"><ResetIcon /></SideTool></Row>
                        <Row><SideTool $width={40} aria-label="Sección"><SectionIcon /><TightCaret /></SideTool></Row>
                    </Rows>
                </GroupBody>
                <GroupFooter><GroupTitle $left={4}>Diapositivas</GroupTitle></GroupFooter>
            </Group>
            <Divider />
            <Group $width={249}>
                <GroupBody $left={10}>
                    <Rows>
                        <Row>
                            <Combo $width={174}>
                                <select aria-label="Fuente" disabled />
                                <Caret $dim />
                            </Combo>
                            <Combo $width={57}>
                                <select aria-label="Tamaño de fuente" disabled>
                                    <option>24</option>
                                </select>
                                <Caret $dim />
                            </Combo>
                        </Row>
                        <Row>
                            <Tool $bold disabled>N</Tool>
                            <Tool $bold $italic disabled>K</Tool>
                            <Tool $bold $line="underline" disabled>S</Tool>
                            <Tool $bold $shadow disabled>S</Tool>
                            <Tool $size={12} $line="line-through" disabled>abc</Tool>
                            <Tool disabled aria-label="Espaciado"><SpacingIcon /></Tool>
                            <MoreButton $width={8} aria-label="Más"><Caret $dim /></MoreButton>
                        </Row>
                        <Row>
                            <Tool disabled aria-label="Resaltado"><MarkerIcon /></Tool>
                            <MoreButton $width={14} aria-label="Más"><Caret $dim /></MoreButton>
                            <Tool $width={30} $size={18} disabled>A</Tool>
                            <MoreButton $width={12} aria-label="Más"><Caret /></MoreButton>
                            <Tool $width={30} disabled>Aa</Tool>
                            <MoreButton $width={10} aria-label="Más"><Caret $dim /></MoreButton>
                            <ToolLine $gap={7} />
                            <Tool $size={18} disabled>A<SizeArrow $up /></Tool>
                            <Tool disabled>A<SizeArrow /></Tool>
                            <ToolLine $gap={4} />
                            <Tool disabled aria-label="Borrar formato"><EraserIcon /></Tool>
                        </Row>
                    </Rows>
                </GroupBody>
                <GroupFooter><GroupTitle $right={8}>Fuente</GroupTitle><Launcher dim /></GroupFooter>
            </Group>
            <Divider />
            <Group $width={198}>
                <GroupBody $left={10}>
                    <Rows $right={15}>
                        <Row>
                            <Tool disabled aria-label="Viñetas"><ListIcon /></Tool>
                            <MoreButton $width={14} aria-label="Más"><Caret $dim /></MoreButton>
                            <Tool $width={30} disabled aria-label="Numeración"><ListIcon numbered /></Tool>
                            <MoreButton $width={12} aria-label="Más"><Caret $dim /></MoreButton>
                            <ToolLine $gap={6} />
                            <Tool disabled $width={24} aria-label="Interlineado"><LineSpacing /></Tool>
                            <MoreButton $width={10} aria-label="Más"><Caret $dim /></MoreButton>
                            <Pusher />
                            <Tool disabled aria-label="Dirección del texto"><TextDirection /></Tool>
                            <MoreButton $width={8} aria-label="Más"><Caret $dim /></MoreButton>
                        </Row>
                        <Row>
                            <Tool disabled aria-label="Disminuir nivel"><IndentIcon /></Tool>
                            <Tool disabled aria-label="Aumentar nivel"><IndentIcon right /></Tool>
                            <ToolLine $gap={4} />
                            <Tool disabled aria-label="Columnas">
                                <Lines height={14} rows={[0, 3, 6, 9, 12].flatMap((y) => [[0, 8, y], [10, 18, y]])} />
                            </Tool>
                            <MoreButton $width={8} aria-label="Más"><Caret $dim /></MoreButton>
                            <Pusher />
                            <Tool disabled aria-label="Alinear texto"><AlignText /></Tool>
                            <MoreButton $width={8} aria-label="Más"><Caret $dim /></MoreButton>
                        </Row>
                        <Row>
                            <Tool disabled aria-label="Izquierda"><Lines width={14} height={11} rows={[[0, 14, 0], [0, 10, 3], [0, 14, 6], [0, 10, 9]]} /></Tool>
                            <Tool disabled aria-label="Centro"><Lines width={16} height={11} rows={[[0, 16, 0], [3, 13, 3], [0, 16, 6], [3, 13, 9]]} /></Tool>
                            <Tool disabled aria-label="Derecha"><Lines width={14} height={11} rows={[[0, 14, 0], [4, 14, 3], [0, 14, 6], [4, 14, 9]]} /></Tool>
                            <Tool disabled aria-label="Justificar"><Lines width={16} height={14} rows={[[0, 16, 0], [0, 16, 3], [0, 16, 6], [0, 16, 9], [0, 16, 12]]} /></Tool>
                            <Pusher />
                            <Tool disabled aria-label="SmartArt"><SmartArt /></Tool>
                            <MoreButton $width={8} aria-label="Más"><Caret $dim /></MoreButton>
                        </Row>
                    </Rows>
                </GroupBody>
                <GroupFooter><GroupTitle $right={8}>Párrafo</GroupTitle><Launcher dim /></GroupFooter>
            </Group>
            <Divider />
            <BoxGroup width={68} label="Dibujo" icon={<DrawIcon />} />
        </Ribbon>
        <Stage>
            <Thumbnails>
                <SlideNumber>1</SlideNumber>
                <Thumbnail aria-label="Diapositiva 1"><ThumbArt /></Thumbnail>
            </Thumbnails>
            <Workspace>
                <Slide>
                    <SlideTable>
                        <Table $row={23} $first={146}>
                            <SalesRows />
                        </Table>
                    </SlideTable>
                    <SalesChart chart={slideChart} />
                </Slide>
            </Workspace>
        </Stage>
    </PowerPane>
);

const App = () => (
    <>
        <GlobalStyle />
        <Desktop>
            <Excel />
            <PowerPoint />
        </Desktop>
    </>
);

export default App;
